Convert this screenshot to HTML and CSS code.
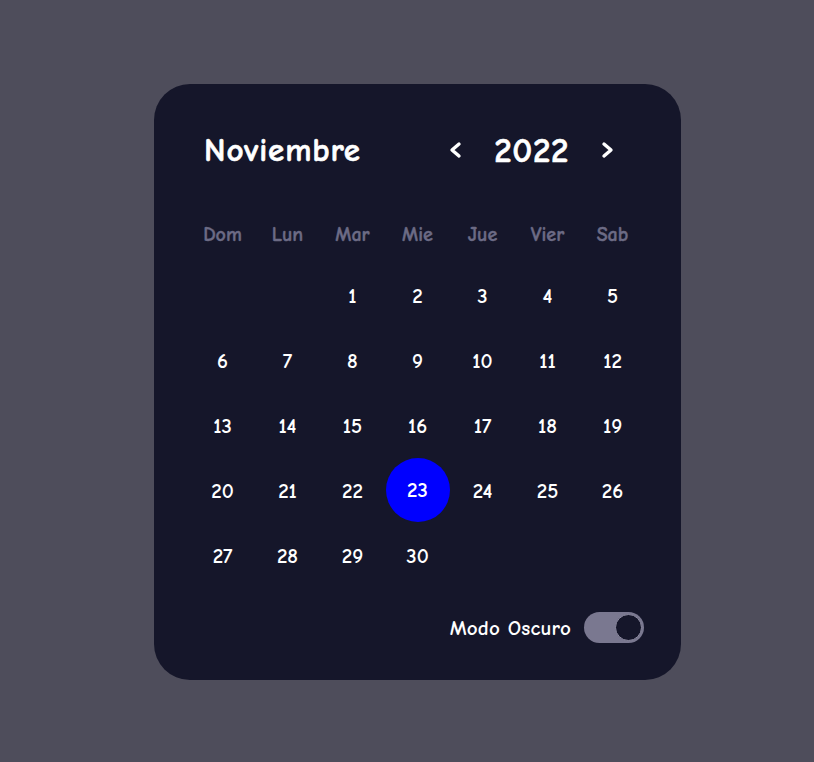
FILE: index.html
```html
<!DOCTYPE html>
<html lang="es">
<head>
<meta charset="utf-8">
<title>Calendario</title>
<link rel="stylesheet" href="styles.css">
</head>
<body>
<div class="calendar">
  <div class="header">
    <div class="month">Noviembre</div>
    <div class="year-nav">
      <span class="arrow">
        <svg width="15" height="18" viewBox="0 0 15 18"><path d="M11 3 L4 9 L11 15" fill="none" stroke="#fff" stroke-width="3.4" stroke-linecap="round" stroke-linejoin="round"/></svg>
      </span>
      <span class="year">2022</span>
      <span class="arrow">
        <svg width="15" height="18" viewBox="0 0 15 18"><path d="M4 3 L11 9 L4 15" fill="none" stroke="#fff" stroke-width="3.4" stroke-linecap="round" stroke-linejoin="round"/></svg>
      </span>
    </div>
  </div>
  <div class="grid">
    <div class="wd">Dom</div><div class="wd">Lun</div><div class="wd">Mar</div><div class="wd">Mie</div><div class="wd">Jue</div><div class="wd">Vier</div><div class="wd">Sab</div>
    <div class="day"></div><div class="day"></div><div class="day">1</div><div class="day">2</div><div class="day">3</div><div class="day">4</div><div class="day">5</div>
    <div class="day">6</div><div class="day">7</div><div class="day">8</div><div class="day">9</div><div class="day">10</div><div class="day">11</div><div class="day">12</div>
    <div class="day">13</div><div class="day">14</div><div class="day">15</div><div class="day">16</div><div class="day">17</div><div class="day">18</div><div class="day">19</div>
    <div class="day">20</div><div class="day">21</div><div class="day">22</div><div class="day today">23</div><div class="day">24</div><div class="day">25</div><div class="day">26</div>
    <div class="day">27</div><div class="day">28</div><div class="day">29</div><div class="day">30</div>
  </div>
  <div class="footer">
    <span class="mode">Modo Oscuro</span>
    <span class="toggle"><span class="knob"></span></span>
  </div>
</div>
</body>
</html>
```
FILE: styles.css
```css
* { box-sizing: border-box; }
html, body { margin: 0; }
body {
  min-height: 100vh;
  background: #4e4d5b;
  display: flex;
  justify-content: center;
  align-items: center;
  padding-left: 21px;
  padding-top: 2px;
  font-family: "Comic Sans MS", "Comic Neue", "Open Sans", sans-serif;
  color: #fff;
}
.calendar {
  width: 527px;
  height: 596px;
  background: #15162a;
  border-radius: 36px;
  padding: 36px 36px 0 36px;
}
.header {
  height: 60px;
  margin-bottom: 18px;
  display: flex;
  align-items: center;
  justify-content: space-between;
  padding: 0 30px 0 14px;
}
.month {
  font-size: 33px;
  font-weight: bold;
  letter-spacing: 0.9px;
  -webkit-text-stroke: 0.6px #fff;
}
.year-nav {
  display: flex;
  align-items: center;
  gap: 31px;
}
.arrow { display: flex; align-items: center; }
.year {
  font-size: 35px;
  font-weight: bold;
  letter-spacing: 0.6px;
  -webkit-text-stroke: 0.6px #fff;
}
.grid {
  display: grid;
  grid-template-columns: repeat(7, 65px);
  grid-auto-rows: 65px;
}
.wd {
  display: flex;
  align-items: center;
  justify-content: center;
  font-size: 20px;
  font-weight: bold;
  color: #6c6b85;
  -webkit-text-stroke: 0.4px #6c6b85;
  padding-top: 8px;
}
.day {
  display: flex;
  align-items: center;
  justify-content: center;
  font-size: 21px;
  font-weight: 600;
}
.today {
  width: 64px;
  height: 64px;
  border-radius: 50%;
  background: #0000ff;
  margin: 0 auto;
}
.footer {
  margin-top: 24px;
  display: flex;
  justify-content: flex-end;
  align-items: center;
  gap: 13px;
  padding-right: 1px;
}
.mode { font-size: 21px; font-weight: 600; letter-spacing: 0.2px; }
.toggle {
  width: 60px;
  height: 31px;
  border-radius: 16px;
  background: #7a7890;
  display: flex;
  align-items: center;
  justify-content: flex-end;
  padding-right: 2px;
}
.knob {
  width: 27px;
  height: 27px;
  border-radius: 50%;
  background: #15162a;
  border: 1px solid #8c8aa0;
}
```
